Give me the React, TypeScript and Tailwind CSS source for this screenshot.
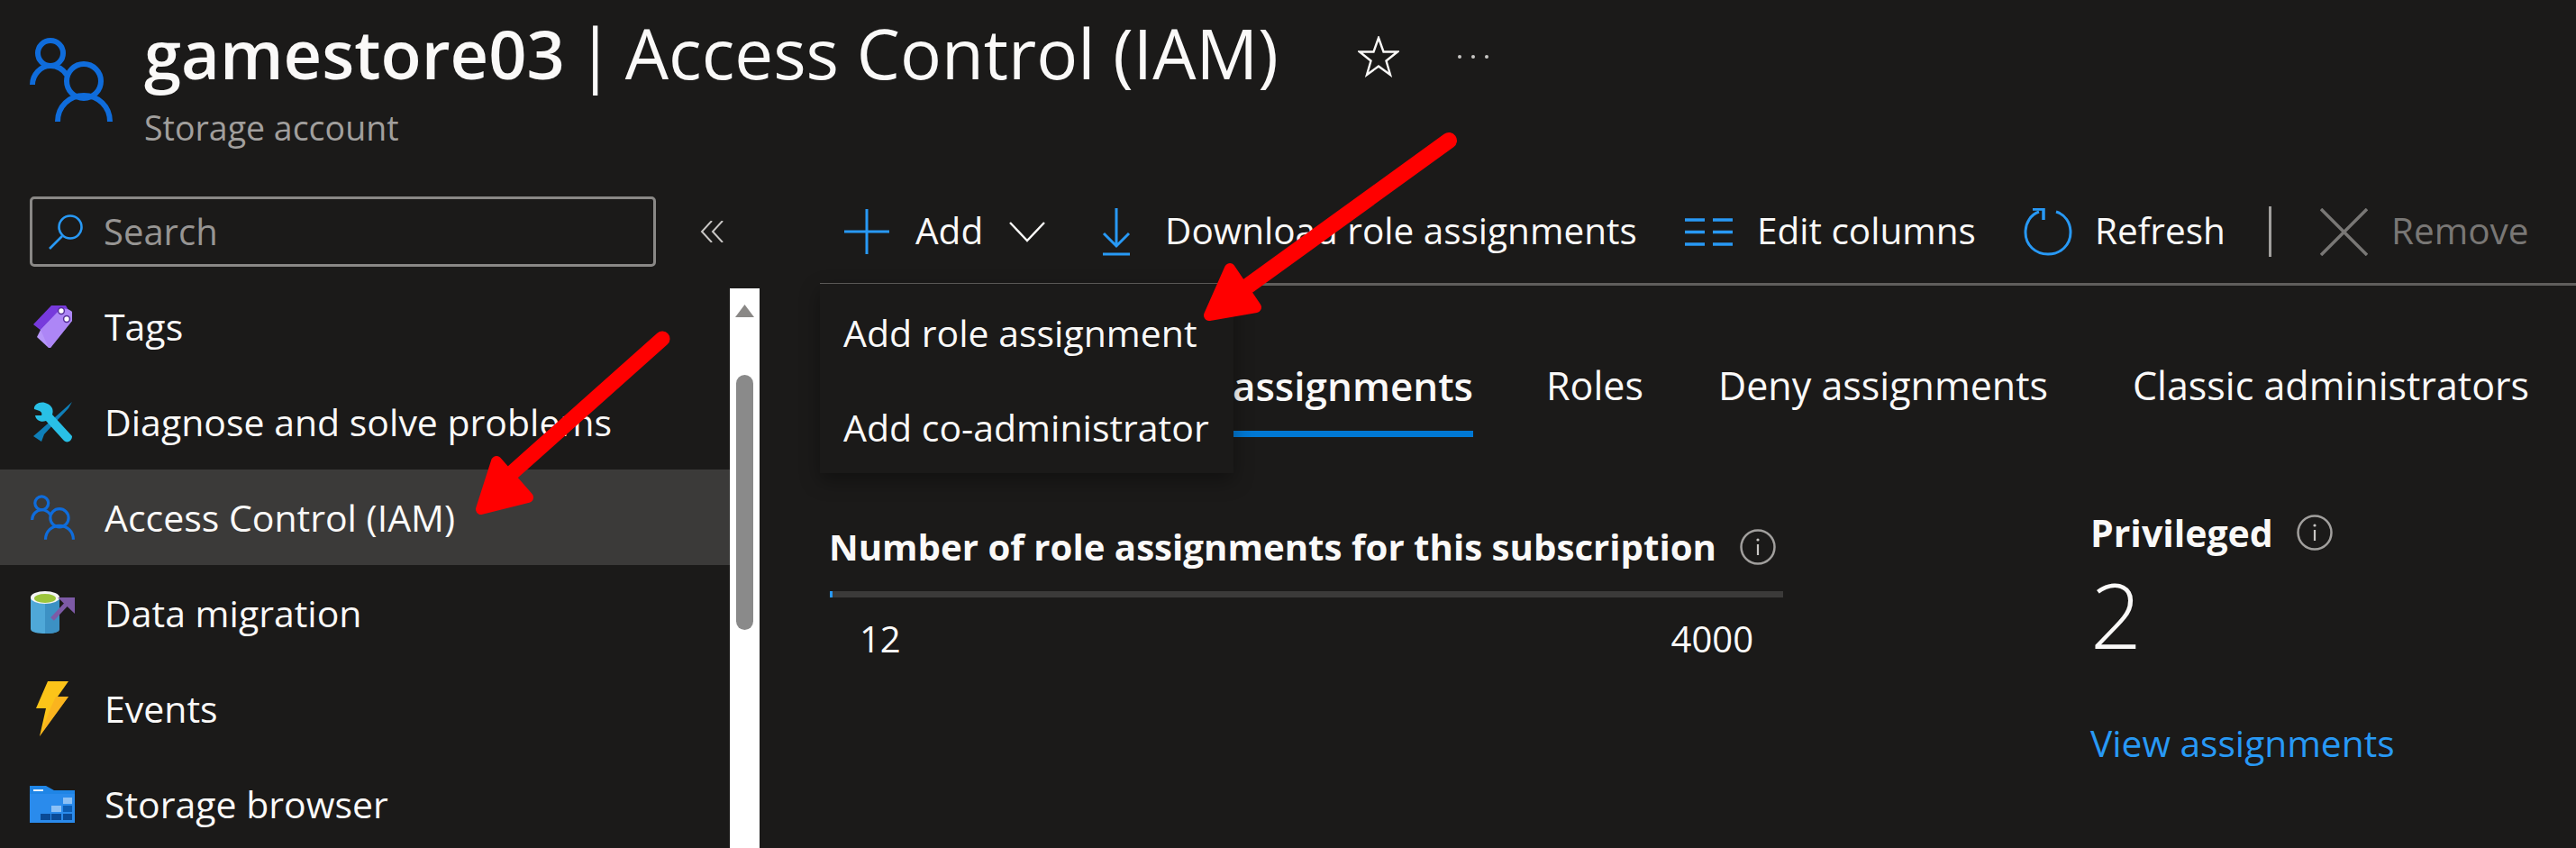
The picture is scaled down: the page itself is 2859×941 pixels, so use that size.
const PeopleIcon = ({ className }: { className: string }) => (
  <svg viewBox="0 0 92 93" className={className} fill="none" stroke="#0f6cdb" strokeWidth="6" strokeLinecap="butt">
    <circle cx="23" cy="17" r="14" />
    <path d="M3 52C3 41 12 31 23 31C31 31 37 35 41 41" />
    <circle cx="60" cy="48" r="19" />
    <path d="M31 93C31 76 44 64 60 64C76 64 89 76 89 93" />
  </svg>
);

const Info = ({ className }: { className: string }) => (
  <svg viewBox="0 0 40 40" className={className} fill="none">
    <circle cx="20" cy="20" r="18.5" stroke="#a19f9d" strokeWidth="2.5" />
    <circle cx="20" cy="12" r="1.6" fill="#c8c6c4" />
    <path d="M20 17V29" stroke="#c8c6c4" strokeWidth="2.2" />
  </svg>
);

const TagIcon = () => (
  <svg viewBox="0 0 43 47" className="h-[47px] w-[43px]">
    <path d="M20 0H36L39 5L14 32L0 21Z" fill="#773adc" />
    <path d="M8 27L30 4C33 3 39 3 43 7V17L19 47H17L4 35Z" fill="#b796f9" />
    <path d="M8 27L30 4C33 3 39 3 43 7V17L19 47H17Z" fill="#a67af4" opacity="0.55" />
    <circle cx="31" cy="6" r="3.4" fill="#fff" stroke="#552f99" strokeWidth="1.5" />
    <circle cx="37" cy="15" r="3.4" fill="#fff" stroke="#552f99" strokeWidth="1.5" />
  </svg>
);

const WrenchIcon = () => (
  <svg viewBox="0 0 43 45" className="h-[45px] w-[43px]">
    <path d="M43 0L39 7L12 36L9 44L0 38L7 32L33 9Z" fill="#0f7fb8" />
    <path d="M13 1C6 -1 0 4 1 8L7 10C9 11 10 13 9 15L2 15C3 21 9 23 14 21L34 43C37 46 43 44 43 38L21 14C23 8 20 3 13 1Z" fill="#29c0e6" />
  </svg>
);

const DataIcon = () => (
  <svg viewBox="0 0 49 48" className="h-[48px] w-[49px]">
    <path d="M0 7V42C0 46 9 47 16 47C24 47 32 46 32 42V7Z" fill="#4fa8d8" />
    <path d="M16 11V47C24 47 32 46 32 42V7Z" fill="#3c91c4" />
    <ellipse cx="16" cy="7" rx="16" ry="7" fill="#f4f4f4" />
    <ellipse cx="16" cy="8" rx="12" ry="5" fill="#9cc53c" />
    <path d="M24 31L40 14" stroke="#7d5aa6" strokeWidth="5" />
    <path d="M30 7H49V25Z" fill="#7d5aa6" />
  </svg>
);

const BoltIcon = () => (
  <svg viewBox="0 0 36 61" className="h-[61px] w-[36px]">
    <path d="M13 0H36L24 17H36L4 61L11 30H0Z" fill="#fcc419" />
    <path d="M22 17H36L4 61L16 30Z" fill="#f7a823" opacity="0.55" />
  </svg>
);

const StorageIcon = () => (
  <svg viewBox="0 0 50 41" className="h-[41px] w-[50px]">
    <path d="M0 0H18L27 5H50V41H0Z" fill="#1f85e6" />
    <path d="M0 9H50V41H0Z" fill="#2a8bec" />
    <rect x="4" y="4" width="11" height="2" fill="#e8f3fe" />
    <rect x="37" y="13" width="10" height="7" fill="#8cc0f5" />
    <rect x="24" y="22" width="11" height="7" fill="#8cc0f5" />
    <rect x="37" y="22" width="10" height="7" fill="#0d5db4" />
    <rect x="12" y="31" width="11" height="7" fill="#0a4a96" />
    <rect x="24" y="31" width="11" height="7" fill="#0a4a96" />
    <rect x="37" y="31" width="10" height="7" fill="#0a4a96" />
  </svg>
);

const menuItems = [
  { label: "Tags", icon: <TagIcon /> },
  { label: "Diagnose and solve problems", icon: <WrenchIcon /> },
  { label: "Access Control (IAM)", icon: <PeopleIcon className="h-[50px] w-[49px]" />, active: true },
  { label: "Data migration", icon: <DataIcon /> },
  { label: "Events", icon: <BoltIcon /> },
  { label: "Storage browser", icon: <StorageIcon /> },
];

const Sidebar = () => (
  <aside className="flex h-full w-[843px] shrink-0 flex-col">
    <div className="flex h-[78px] items-center pl-[33px]">
      <div className="flex h-[78px] w-[695px] items-center rounded-[5px] border-[3px] border-[#8a8886] pl-[17px]">
        <svg viewBox="0 0 40 40" className="h-[40px] w-[40px]" fill="none" stroke="#2899f5" strokeWidth="2.6">
          <circle cx="25" cy="15" r="12.5" />
          <path d="M16 25L2 39" />
        </svg>
        <span className="-mt-[1px] ml-[22px] text-[40px] text-[#979593]">Search</span>
      </div>
      <svg viewBox="0 0 26 24" className="ml-[49px] h-[24px] w-[26px]" fill="none" stroke="#c8c6c4" strokeWidth="2">
        <path d="M13 0L2 12L13 24M25 0L14 12L25 24" />
      </svg>
    </div>
    <div className="mt-[24px] flex min-h-0 flex-1">
      <nav className="w-[810px] overflow-hidden">
        <div className="-mt-[11px]">
          {menuItems.map((m) => (
            <div key={m.label} className={`flex h-[106px] items-center ${m.active ? "bg-[#3b3a39]" : ""}`}>
              <div className="flex w-[116px] justify-center">{m.icon}</div>
              <span className="mt-[2px] whitespace-nowrap text-[41px] text-[#faf9f8]">{m.label}</span>
            </div>
          ))}
        </div>
      </nav>
      <div className="flex w-[33px] flex-col items-center bg-white">
        <svg viewBox="0 0 21 14" className="mt-[18px] h-[14px] w-[21px]">
          <path d="M10.5 0L21 14H0Z" fill="#8a8886" />
        </svg>
        <div className="mt-[64px] h-[283px] w-[19px] rounded-full bg-[#8a8a8a]" />
      </div>
    </div>
  </aside>
);

const ToolItem = ({ icon, label, disabled, className }: { icon: React.ReactNode; label: string; disabled?: boolean; className: string }) => (
  <div className={`flex items-center ${className}`}>
    {icon}
    <span className={`-mt-[2px] whitespace-nowrap text-[40.5px] ${disabled ? "text-[#797775]" : "text-[#faf9f8]"}`}>{label}</span>
  </div>
);

const Toolbar = () => (
  <div className="ml-[67px] flex h-[99px] border-b-[3px] border-[#605e5c] pl-[27px]">
    <div className="flex h-[78px] items-center">
      <ToolItem
        className="w-[286px]"
        label="Add"
        icon={
          <svg viewBox="0 0 50 50" className="mr-[29px] h-[50px] w-[50px]" fill="none" stroke="#2899f5" strokeWidth="3">
            <path d="M25 0V50M0 25H50" />
          </svg>
        }
      />
      <svg viewBox="0 0 40 23" className="-ml-[103px] mr-[63px] h-[23px] w-[40px]" fill="none" stroke="#faf9f8" strokeWidth="2.4">
        <path d="M1 1L20 21L39 1" />
      </svg>
      <ToolItem
        className="w-[647px]"
        label="Download role assignments"
        icon={
          <svg viewBox="0 0 32 53" className="mr-[38px] h-[53px] w-[32px]" fill="none" stroke="#2899f5" strokeWidth="3">
            <path d="M16 0V42M2 28L16 42L30 28M1 51H31" />
          </svg>
        }
      />
      <ToolItem
        className="w-[376px]"
        label="Edit columns"
        icon={
          <svg viewBox="0 0 53 31" className="mr-[27px] h-[31px] w-[53px]" fill="none" stroke="#2899f5" strokeWidth="3.5">
            <path d="M0 2H22M31 2H53M0 15.5H22M31 15.5H53M0 29H22M31 29H53" />
          </svg>
        }
      />
      <ToolItem
        className="w-[272px]"
        label="Refresh"
        icon={
          <svg viewBox="0 0 54 53" className="mr-[25px] h-[53px] w-[54px]" fill="none" stroke="#2899f5" strokeWidth="3">
            <path d="M36 4C46 7 52 16 52 27C52 41 41 51 27 51C13 51 2 41 2 27C2 16 8 7 17 4" />
            <path d="M10 1H22V13" strokeWidth="3.5" />
          </svg>
        }
      />
      <div className="mr-[54px] h-[56px] w-[3px] bg-[#a19f9d]" />
      <ToolItem
        className=""
        disabled
        label="Remove"
        icon={
          <svg viewBox="0 0 53 53" className="mr-[26px] h-[53px] w-[53px]" fill="none" stroke="#797775" strokeWidth="3.5">
            <path d="M1 1L52 52M52 1L1 52" />
          </svg>
        }
      />
    </div>
  </div>
);

const Tabs = () => (
  <div className="ml-[67px] flex h-[168px] items-start text-[43px] leading-[40px] text-[#faf9f8]">
    <div className="flex w-[725px] justify-end whitespace-nowrap">
      <span className="h-[168px] border-b-[7px] border-[#0078d4] pt-[91px] text-[44px] font-semibold">Role assignments</span>
    </div>
    <div className="ml-[81px] w-[191px] pt-[91px]">Roles</div>
    <div className="w-[460px] whitespace-nowrap pt-[91px]">Deny assignments</div>
    <div className="whitespace-nowrap pt-[91px]">Classic administrators</div>
  </div>
);

const Stats = () => (
  <div className="flex pl-[77px] pt-[97px]">
    <div className="w-[1402px]">
      <div className="flex items-center">
        <span className="whitespace-nowrap text-[40.2px] font-bold leading-[50px] text-[#faf9f8]">
          Number of role assignments for this subscription
        </span>
        <Info className="ml-[26px] h-[40px] w-[40px]" />
      </div>
      <div className="ml-[1px] mt-[24px] h-[7px] w-[1058px] bg-[#3b3a39]">
        <div className="h-full w-[3px] bg-[#2899f5]" />
      </div>
      <div className="mt-[21px] flex w-[1026px] justify-between pl-[34px] text-[40px] leading-[50px] text-[#faf9f8]">
        <span>12</span>
        <span>4000</span>
      </div>
    </div>
    <div className="-mt-[16px] -ml-[2px]">
      <div className="flex items-center">
        <span className="text-[41px] font-bold leading-[50px] text-[#faf9f8]">Privileged</span>
        <Info className="ml-[26px] h-[40px] w-[40px]" />
      </div>
      <div className="mt-[5px] text-[100px] font-light leading-[120px] text-[#faf9f8]">2</div>
      <div className="mt-[58px] text-[40.7px] leading-[50px] text-[#2899f5]">View assignments</div>
    </div>
  </div>
);

export default function App() {
  return (
    <div className="relative h-[941px] w-[2859px] overflow-hidden bg-[#1b1a19] font-['Open_Sans',sans-serif]">
      <header className="flex h-[218px] pl-[33px] pt-[42px]">
        <PeopleIcon className="h-[93px] w-[92px]" />
        <div className="ml-[35px] -mt-[32px]">
          <div className="flex items-baseline whitespace-nowrap text-[76.4px] leading-[96px] text-[#faf9f8]">
            <span className="text-[74px] font-semibold">gamestore03</span>
            <span className="ml-[13px] mr-[12px]">|</span>
            <span>Access Control (IAM)</span>
          </div>
          <div className="mt-[9px] text-[37.5px] leading-[50px] text-[#a19f9d]">Storage account</div>
        </div>
        <svg viewBox="0 0 46 46" className="ml-[88px] -mt-[2px] h-[46px] w-[46px]" fill="none" stroke="#faf9f8" strokeWidth="2.4">
          <path d="M23 2L28.5 17.5H44L31.5 27.5L36 43L23 33.5L10 43L14.5 27.5L2 17.5H17.5Z" />
        </svg>
        <div className="ml-[65px] mt-[19px] flex gap-[11px]">
          <div className="h-[4px] w-[4px] rounded-full bg-[#c8c6c4]" />
          <div className="h-[4px] w-[4px] rounded-full bg-[#c8c6c4]" />
          <div className="h-[4px] w-[4px] rounded-full bg-[#c8c6c4]" />
        </div>
      </header>
      <div className="flex h-[723px]">
        <Sidebar />
        <main className="relative min-w-0 flex-1">
          <Toolbar />
          <Tabs />
          <Stats />
          <div className="absolute left-[67px] top-[97px] flex h-[210px] w-[459px] flex-col bg-[#1b1a19] pt-[2px] pl-[26px] text-[41px] text-[#faf9f8] shadow-[0_8px_20px_rgba(0,0,0,0.35)]">
            <div className="flex h-[105px] shrink-0 items-center whitespace-nowrap">Add role assignment</div>
            <div className="flex h-[105px] shrink-0 items-center whitespace-nowrap">Add co-administrator</div>
          </div>
        </main>
      </div>
      <svg className="pointer-events-none absolute left-0 top-0 h-[941px] w-[2859px]" viewBox="0 0 2859 941" fill="#ff0000" stroke="#ff0000" strokeLinejoin="round" strokeLinecap="round">
        <path d="M735 376L560 532" strokeWidth="17" fill="none" />
        <path d="M551 512L586 552L534 565Z" strokeWidth="12" />
        <path d="M1608 156L1384 318" strokeWidth="18" fill="none" />
        <path d="M1365 298L1394 341L1342 350Z" strokeWidth="12" />
      </svg>
    </div>
  );
}
